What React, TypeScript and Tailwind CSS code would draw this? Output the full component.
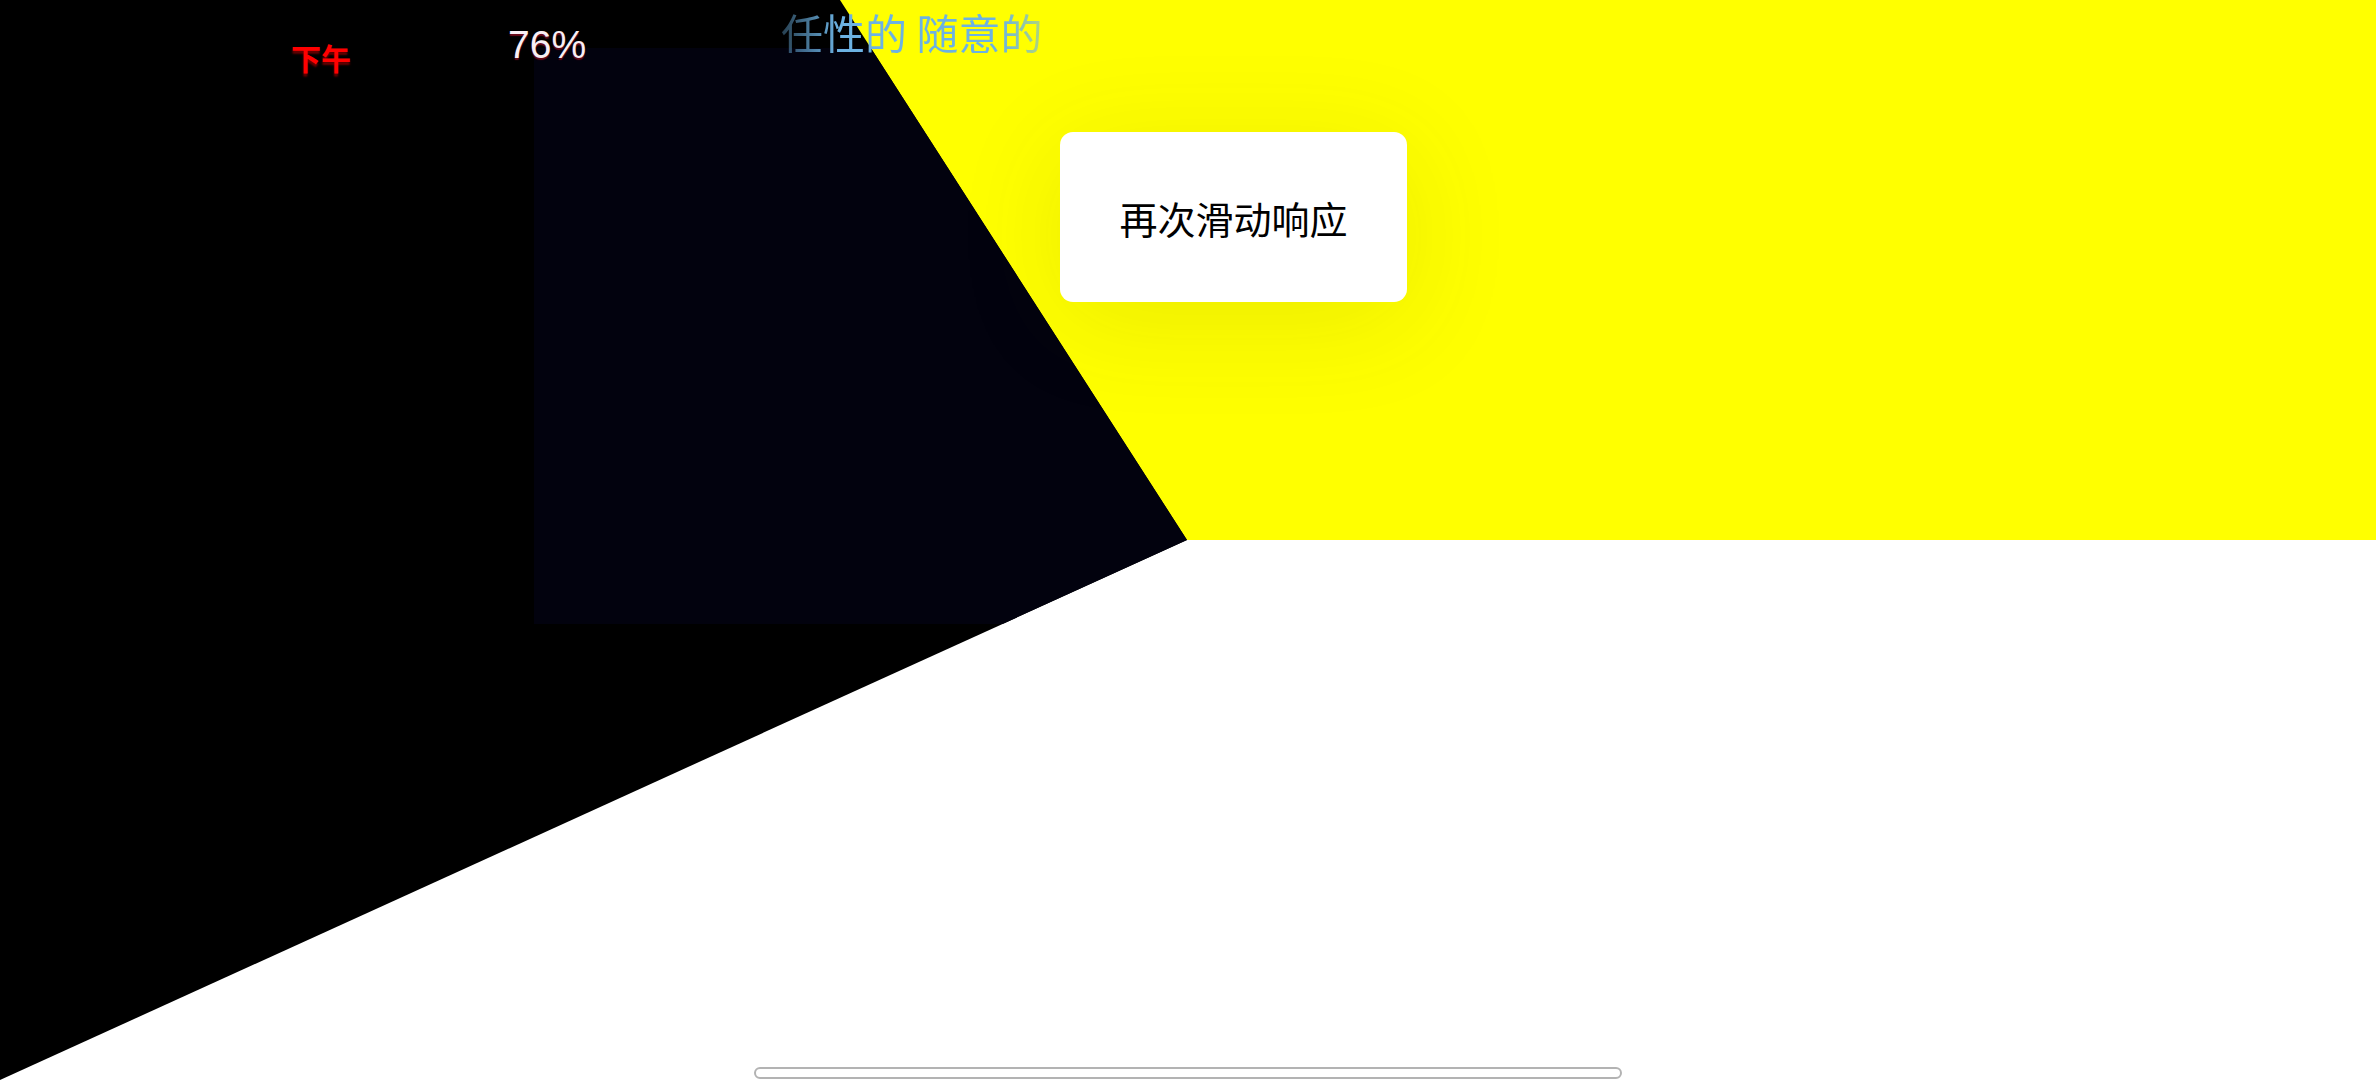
import React from "react";

export default function App() {
  return (
    <div className="relative w-[2376px] h-[1080px] overflow-hidden bg-white font-['Noto_Sans_CJK_SC',sans-serif]">
      {/* top yellow half with the card */}
      <div className="h-[540px] bg-[#ffff00] pt-[132px] pl-[1060px]">
        <div className="relative z-10 flex h-[170px] w-[347px] items-center justify-center rounded-[13px] bg-white shadow-[0_18px_110px_rgba(70,70,0,0.11)]">
          <span className="pt-[2px] text-[38px] leading-none text-black font-['Noto_Sans_CJK_SC',sans-serif]">再次滑动响应</span>
        </div>
      </div>

      {/* bottom white half with home indicator */}
      <div className="flex h-[540px] items-end justify-center pb-[1px]">
        <div className="h-[12px] w-[868px] rounded-full border-2 border-[#b3b3b3] bg-white" />
      </div>

      {/* black wedge drawn over the canvas */}
      <div className="absolute inset-0 bg-black pl-[534px] pt-[48px] [clip-path:polygon(0_0,840px_0,1187px_540px,0_1080px)]">
        <div className="h-[576px] w-[720px] bg-[#02020e]" />
      </div>

      {/* overlay labels */}
      <div className="absolute inset-x-0 top-0 flex items-start pl-[291px]">
        <span className="mt-[42px] text-[30px] font-bold leading-none text-[#ff0000] [text-shadow:0_3px_2px_rgba(110,0,0,0.95)] font-['Noto_Sans_CJK_SC',sans-serif]">
          下午
        </span>
        <span className="ml-[157px] mt-[25px] text-[39px] leading-none text-[#f8eef4] [text-shadow:0_2px_1px_#6b0a1a] font-['Liberation_Sans',Arial,sans-serif]">
          76%
        </span>
        <span className="ml-[195px] mt-[11px] text-[42px] leading-none text-transparent bg-clip-text bg-[linear-gradient(90deg,rgba(108,178,226,0.35),#6cb2e2_22%,#6cb2e2_84%,rgba(108,178,226,0.55))] font-['Noto_Sans_CJK_SC',sans-serif]">
          任性的 随意的
        </span>
      </div>
    </div>
  );
}
